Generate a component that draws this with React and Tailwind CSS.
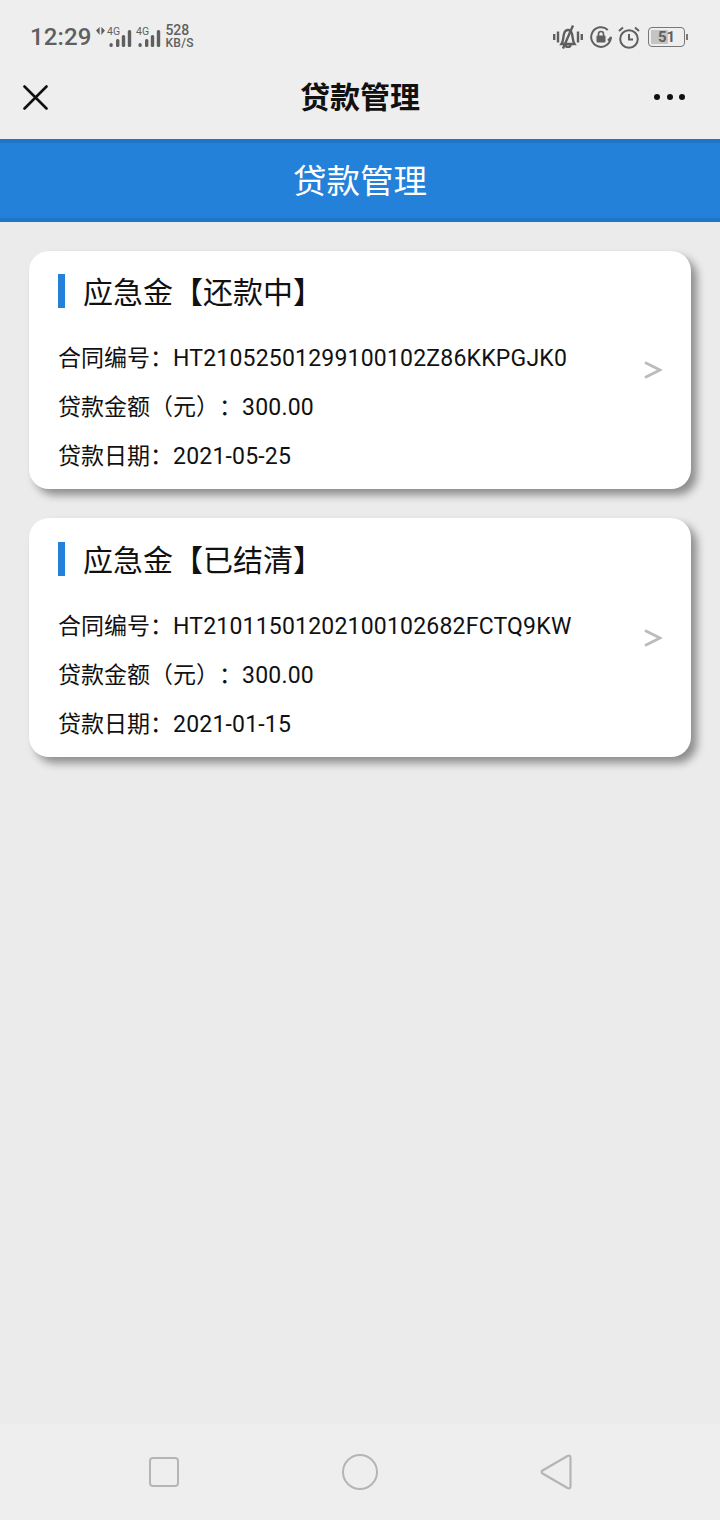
import React from "react";

const loans = [
  { title: "应急金【还款中】", contract: "HT21052501299100102Z86KKPGJK0", amount: "300.00", date: "2021-05-25" },
  { title: "应急金【已结清】", contract: "HT21011501202100102682FCTQ9KW", amount: "300.00", date: "2021-01-15" },
];

const Signal = () => (
  <svg width="25" height="22" viewBox="0 0 25 22">
    <text x="0" y="9" fontSize="10.500" fill="currentColor" fontFamily="Roboto, sans-serif">4G</text>
    <rect x="2.500" y="17" width="3.200" height="4" rx="1.600" fill="currentColor" />
    <rect x="9" y="13" width="3.400" height="8" rx="1.500" fill="currentColor" />
    <rect x="14.800" y="9" width="3.400" height="12" rx="1.500" fill="currentColor" />
    <rect x="20.800" y="4" width="3.400" height="17" rx="1.500" fill="currentColor" />
  </svg>
);

const StatusBar = () => (
  <div className="flex h-[72px] items-center justify-between pl-[30px] pr-[32px] pt-[2px] text-[#5f5f5f]">
    <div className="flex items-center">
      <span className="text-[24px] font-medium tracking-[0.1px] font-['Roboto',sans-serif]">12:29</span>
      <svg width="9" height="8" viewBox="0 0 10 9" className="ml-[5px] mb-[12px]">
        <path d="M4 0v9L0 4zM6 0v9l4-5z" fill="currentColor" />
      </svg>
      <div className="ml-[2px] flex gap-[4px]">
        <Signal />
        <Signal />
      </div>
      <div className="ml-[4px] flex flex-col font-medium leading-[13px] font-['Roboto',sans-serif]">
        <span className="text-[14px]">528</span>
        <span className="text-[12px] tracking-[0.3px]">KB/S</span>
      </div>
    </div>
    <div className="flex items-center">
      <svg width="30" height="24" viewBox="0 0 30 24" fill="none" stroke="currentColor" strokeWidth="2.400">
        <path d="M1.200 9v6M5 6.500v11M25 6.500v11M28.800 9v6" />
        <path d="M8.500 19c2-3 1.500-6 2.500-10 .6-2.500 2-4 4-4s3.400 1.500 4 4c1 4 .5 7 2.500 10z" />
        <path d="M20 .5L10 23.500M12.500 20c0 2.500 5 2.500 5 0" />
      </svg>
      <svg width="22" height="22" viewBox="0 0 22 22" fill="none" className="ml-[7px]">
        <path d="M20.800 11a9.800 9.800 0 1 1-3-7" stroke="currentColor" strokeWidth="2" />
        <path d="M21.500 11l-3.500 3.500" stroke="currentColor" strokeWidth="2" />
        <rect x="6.500" y="9.500" width="9" height="7" rx="1" fill="currentColor" />
        <path d="M8.500 10V8a2.500 2.500 0 0 1 5 0v2" stroke="currentColor" strokeWidth="1.600" />
      </svg>
      <svg width="22" height="23" viewBox="0 0 22 23" fill="none" stroke="currentColor" className="ml-[6px]">
        <circle cx="11" cy="13" r="8.800" strokeWidth="2" />
        <path d="M11 8v5.500h4" strokeWidth="2" />
        <path d="M1 5l4-3.500M21 5l-4-3.500" strokeWidth="2" />
      </svg>
      <div className="ml-[8px] flex items-center">
        <div className="relative flex h-[20px] w-[37px] items-center justify-center overflow-hidden rounded-[4px] border border-[#777777]">
          <div className="absolute inset-y-[2px] left-[2px] w-[17px] rounded-[1px] bg-[#c4c4c4]" />
          <span className="relative text-[15px] font-bold font-['Roboto',sans-serif]">51</span>
        </div>
        <div className="ml-[1px] h-[6px] w-[2px] bg-[#777777]" />
      </div>
    </div>
  </div>
);

const NavBar = () => (
  <div className="flex h-[67px] items-center pl-[23px] pr-[35px] pb-[17px]">
    <div className="flex flex-1">
      <svg width="25" height="25" viewBox="0 0 25 25" stroke="#111111" strokeWidth="2.600" strokeLinecap="round">
        <path d="M1.500 1.500l22 22M23.500 1.500l-22 22" />
      </svg>
    </div>
    <span className="ml-[12px] text-[30px] font-bold text-[#111111]">贷款管理</span>
    <div className="flex flex-1 justify-end gap-[6.500px]">
      <div className="h-[6px] w-[6px] rounded-full bg-[#111111]" />
      <div className="h-[6px] w-[6px] rounded-full bg-[#111111]" />
      <div className="h-[6px] w-[6px] rounded-full bg-[#111111]" />
    </div>
  </div>
);

const LoanCard = ({ loan }) => (
  <div className="relative h-[238.4px] rounded-[20px] bg-white pl-[29px] pt-[23.4px] shadow-[6px_6px_8px_rgba(0,0,0,0.4)]">
    <div className="flex h-[34px] items-center">
      <div className="h-[34px] w-[7px] bg-[#2481d9]" />
      <h2 className="ml-[18px] mt-[3px] text-[30px] font-normal text-[#111111]">{loan.title}</h2>
    </div>
    <div className="mt-[26px] text-[23px] leading-[49px] text-[#111111]">
      <p>合同编号：<span className="tracking-[0.2px]">{loan.contract}</span></p>
      <p>贷款金额（元）：<span className="tracking-[0.2px]">{loan.amount}</span></p>
      <p>贷款日期：<span className="tracking-[0.2px]">{loan.date}</span></p>
    </div>
    <svg width="18" height="18" viewBox="0 0 18 18" fill="none" stroke="#bbbbbb" strokeWidth="2.800" className="absolute right-[29px] top-[110.4px]">
      <path d="M1 1.500L16 9 1 16.500" />
    </svg>
  </div>
);

const BottomBar = () => (
  <div className="flex h-[96px] items-center justify-between bg-[#eeeeee] pl-[149px] pr-[148px]">
    <div className="h-[30px] w-[30px] rounded-[4px] border-2 border-[#b5b5b5]" />
    <div className="h-[36px] w-[36px] rounded-full border-2 border-[#b5b5b5]" />
    <svg width="32" height="36" viewBox="0 0 32 36" fill="none" stroke="#b5b5b5" strokeWidth="2.200" strokeLinejoin="round">
      <path d="M2.500 16.500L27.500 2c1.500-.8 3-.2 3 1.500v29c0 1.700-1.500 2.300-3 1.500L2.500 19.500c-1.200-.8-1.200-2.200 0-3z" />
    </svg>
  </div>
);

export default function App() {
  return (
    <div className="flex h-[1520px] w-[720px] flex-col overflow-hidden bg-[#ebebeb] font-['Roboto','Noto_Sans_CJK_SC',sans-serif] [text-spacing-trim:space-all]">
      <div className="bg-[#eeeeee]">
        <StatusBar />
        <NavBar />
      </div>
      <div className="flex h-[83px] items-center justify-center border-y-4 border-[#1f76c7] bg-[#2481d9] pt-[4px] text-[33.500px] text-white">
        贷款管理
      </div>
      <div className="flex flex-1 flex-col gap-[29px] px-[29px] pt-[29px]">
        {loans.map((loan) => (
          <LoanCard key={loan.contract} loan={loan} />
        ))}
      </div>
      <BottomBar />
    </div>
  );
}
